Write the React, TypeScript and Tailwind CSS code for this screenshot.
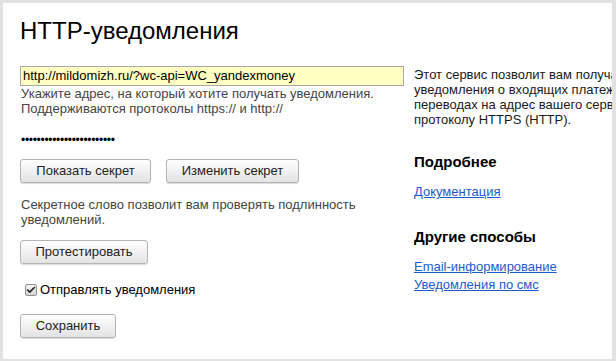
import { Check } from 'lucide-react';

const font = { fontFamily: '"Liberation Sans", Arial, sans-serif' };

const Btn = ({ children, w }: { children: React.ReactNode; w: string }) => (
  <button
    className={`${w} h-[24px] rounded-[3px] border border-[#b4b4b4] bg-gradient-to-b from-[#ffffff] to-[#e3e3e3] text-[13px] text-[#222] shadow-[0_1px_1px_rgba(0,0,0,0.15)]`}
  >
    {children}
  </button>
);

export default function App() {
  return (
    <div
      style={font}
      className="w-[616px] h-[361px] overflow-hidden border-t-[3px] border-l-[3px] border-r-[4px] border-b-[2px] border-[#e2e2e2] bg-white text-[#222]"
    >
      <div className="pl-[17px] pt-[14px]">
        <h1 className="text-[24px] leading-[28px] text-black">HTTP-уведомления</h1>

        <div className="flex gap-[10px] mt-[21px]">
          {/* left column */}
          <div className="w-[384px] shrink-0 flex flex-col">
            <div className="h-[20px] border border-[#a9a9a9] bg-[#ffffc2] px-[2px] text-[13px] leading-[18px] text-black">
              http://mildomizh.ru/?wc-api=WC_yandexmoney
            </div>
            <p className="text-[13px] leading-[15px] text-[#444] mt-[0px] pl-[1px]">
              Укажите адрес, на который хотите получать уведомления.
              <br />
              Поддерживаются протоколы https:// и http://
            </p>

            <div className="mt-[17px] pl-[1px] text-[12px] leading-[14px] tracking-[-0.3px] text-black">
              ••••••••••••••••••••••••
            </div>

            <div className="flex gap-[15px] mt-[12px]">
              <Btn w="w-[131px]">Показать секрет</Btn>
              <Btn w="w-[133px]">Изменить секрет</Btn>
            </div>

            <p className="text-[13px] leading-[15px] text-[#444] mt-[14px] pl-[1px] w-[350px]">
              Секретное слово позволит вам проверять подлинность уведомлений.
            </p>

            <div className="mt-[12px]">
              <Btn w="w-[128px]">Протестировать</Btn>
            </div>

            <label className="flex items-center gap-[3px] mt-[16px] pl-[5px] text-[13px] text-black">
              <span className="w-[12px] h-[12px] rounded-[2px] border border-[#8f8f8f] bg-gradient-to-b from-[#f4f4f4] to-[#d6d6d6] flex items-center justify-center">
                <Check size={10} strokeWidth={4} className="text-[#222]" />
              </span>
              Отправлять уведомления
            </label>

            <div className="mt-[14px]">
              <Btn w="w-[96px]">Сохранить</Btn>
            </div>
          </div>

          {/* right column */}
          <div className="w-[240px] shrink-0 pt-[1px]">
            <p className="text-[13px] leading-[15px] text-[#1a1a1a]">
              Этот сервис позволит вам получать уведомления о входящих платежах и переводах на адрес вашего сервера по
              протоколу HTTPS (HTTP).
            </p>

            <h2 className="mt-[26px] text-[15px] leading-[18px] font-bold text-black">Подробнее</h2>
            <a href="#" className="block mt-[13px] text-[13px] leading-[15px] text-[#1d59cf] underline">
              Документация
            </a>

            <h2 className="mt-[29px] text-[15px] leading-[18px] font-bold text-black">Другие способы</h2>
            <a href="#" className="block mt-[13px] text-[13px] leading-[15px] text-[#1d59cf] underline">
              Email-информирование
            </a>
            <a href="#" className="block mt-[3px] text-[13px] leading-[15px] text-[#1d59cf] underline">
              Уведомления по смс
            </a>
          </div>
        </div>
      </div>
    </div>
  );
}
